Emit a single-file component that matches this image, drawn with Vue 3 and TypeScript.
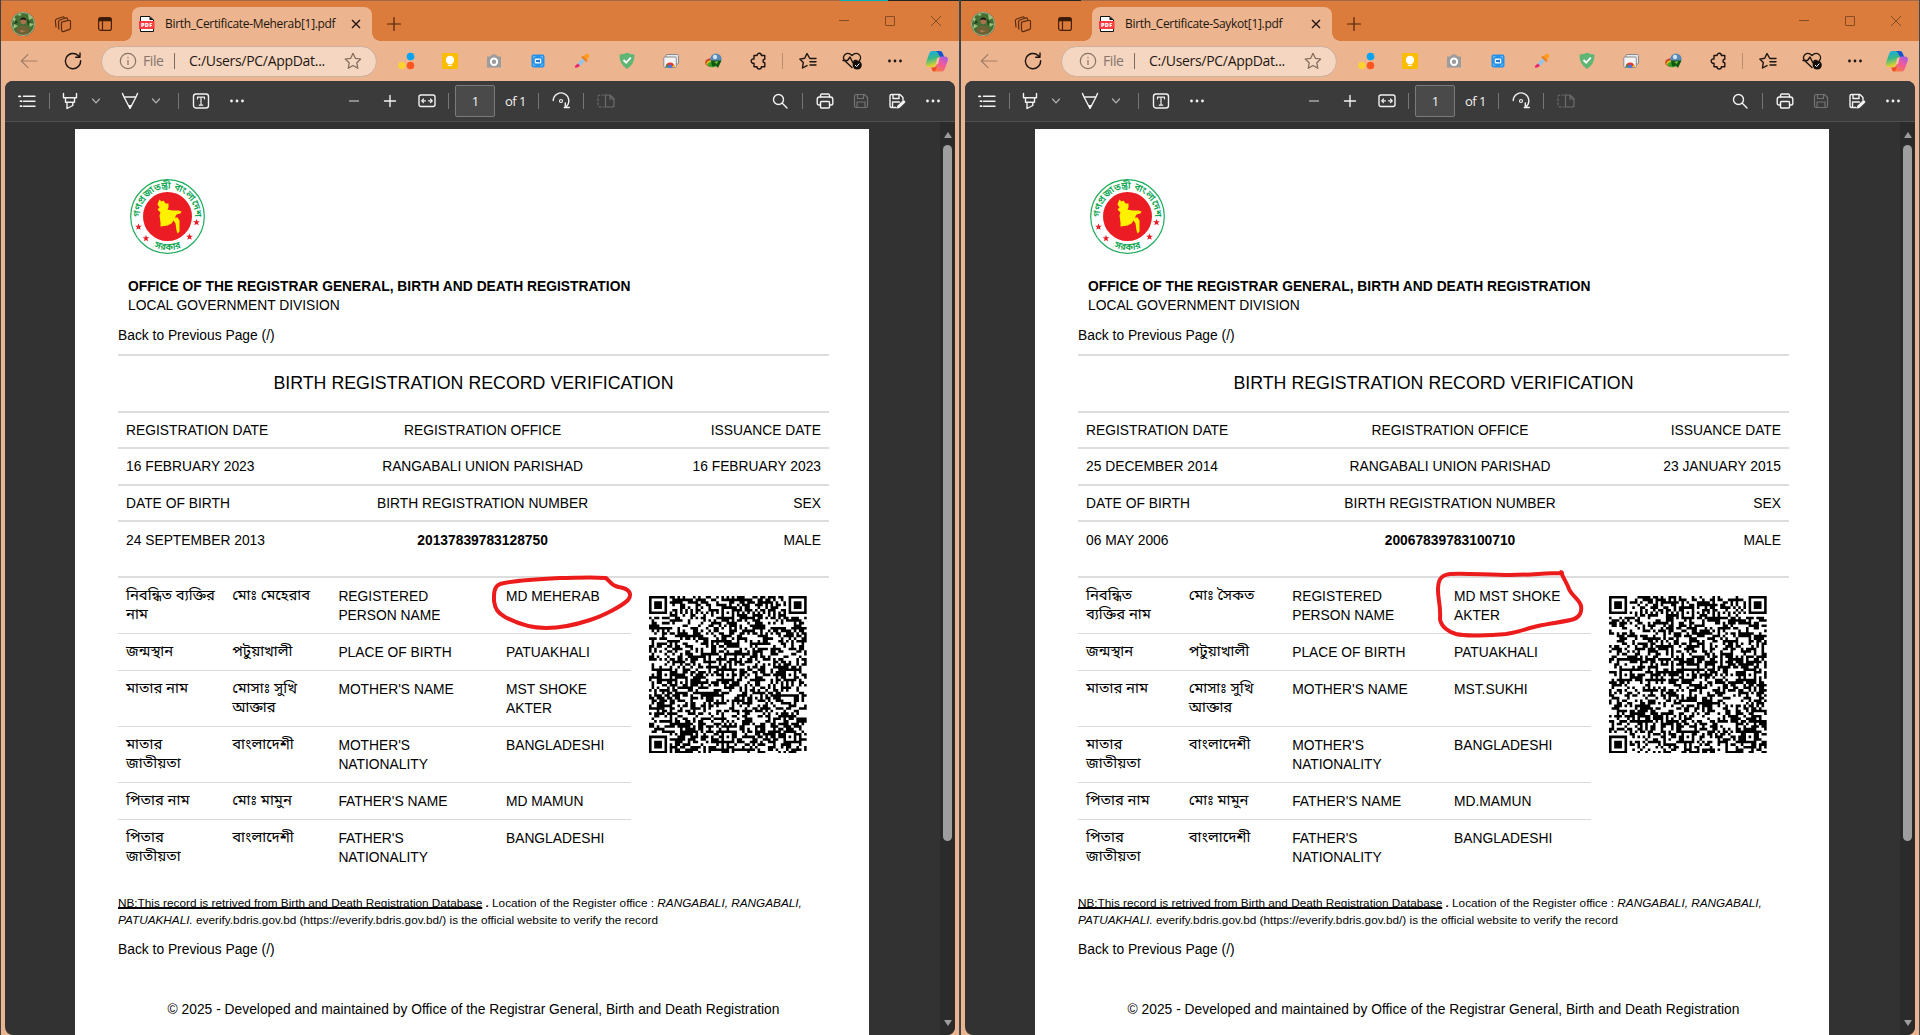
<script setup lang="ts">
interface Item { k: string; c: number; w: number; kind?: 'sep' | 'text' | 'field' | 'tab' | 'address' }
interface Cell { lines: string[] }
interface Doc {
  file: string; officeCol: number; cols: string; mark: string; seed: number
  head: string[][]; rows: Cell[][]
}

const row = (a: string, b: string, c: string, d: string): Cell[] =>
  [a, b, c, d].map((t) => ({ lines: t.split('|') }))

const docs: Doc[] = [
  {
    file: 'Birth_Certificate-Meherab[1].pdf',
    officeCol: 244.6,
    cols: '106.2px 106.2px 167.6px 1fr',
    seed: 11,
    mark: 'M606 578 C590 577 575 578 560 578 C540 579 510 581 500 584 C493 587 494 596 494 601 C495 609 498 613 505 617 C518 624 530 628 546 628 C565 628 578 624 590 620 C603 616 622 606 628 600 C632 595 630 590 623 588 C612 586 612 584 606 578 Z',
    head: [
      ['REGISTRATION DATE', 'REGISTRATION OFFICE', 'ISSUANCE DATE'],
      ['16 FEBRUARY 2023', 'RANGABALI UNION PARISHAD', '16 FEBRUARY 2023'],
      ['DATE OF BIRTH', 'BIRTH REGISTRATION NUMBER', 'SEX'],
      ['24 SEPTEMBER 2013', '20137839783128750', 'MALE'],
    ],
    rows: [
      row('নিবন্ধিত ব্যক্তির|নাম', 'মোঃ মেহেরাব', 'REGISTERED|PERSON NAME', 'MD MEHERAB'),
      row('জন্মস্থান', 'পটুয়াখালী', 'PLACE OF BIRTH', 'PATUAKHALI'),
      row('মাতার নাম', 'মোসাঃ সুখি|আক্তার', "MOTHER'S NAME", 'MST SHOKE|AKTER'),
      row('মাতার|জাতীয়তা', 'বাংলাদেশী', "MOTHER'S|NATIONALITY", 'BANGLADESHI'),
      row('পিতার নাম', 'মোঃ মামুন', "FATHER'S NAME", 'MD MAMUN'),
      row('পিতার|জাতীয়তা', 'বাংলাদেশী', "FATHER'S|NATIONALITY", 'BANGLADESHI'),
    ],
  },
  {
    file: 'Birth_Certificate-Saykot[1].pdf',
    officeCol: 252,
    cols: '102.8px 103.4px 161.8px 1fr',
    seed: 29,
    mark: 'M602 573 C585 573 570 575 550 575 C528 575 505 573 490 574 C480 575 478 581 478 590 C478 600 481 606 480 619 C481 627 489 632 496 634 C508 637 530 635 546 634 C560 632 568 628 578 626 C592 623 604 622 614 619 C620 617 622 611 621 606 C620 600 612 596 609 589 C607 583 604 580 601 572 Z',
    head: [
      ['REGISTRATION DATE', 'REGISTRATION OFFICE', 'ISSUANCE DATE'],
      ['25 DECEMBER 2014', 'RANGABALI UNION PARISHAD', '23 JANUARY 2015'],
      ['DATE OF BIRTH', 'BIRTH REGISTRATION NUMBER', 'SEX'],
      ['06 MAY 2006', '20067839783100710', 'MALE'],
    ],
    rows: [
      row('নিবন্ধিত|ব্যক্তির নাম', 'মোঃ সৈকত', 'REGISTERED|PERSON NAME', 'MD MST SHOKE|AKTER'),
      row('জন্মস্থান', 'পটুয়াখালী', 'PLACE OF BIRTH', 'PATUAKHALI'),
      row('মাতার নাম', 'মোসাঃ সুখি|আক্তার', "MOTHER'S NAME", 'MST.SUKHI'),
      row('মাতার|জাতীয়তা', 'বাংলাদেশী', "MOTHER'S|NATIONALITY", 'BANGLADESHI'),
      row('পিতার নাম', 'মোঃ মামুন', "FATHER'S NAME", 'MD.MAMUN'),
      row('পিতার|জাতীয়তা', 'বাংলাদেশী', "FATHER'S|NATIONALITY", 'BANGLADESHI'),
    ],
  },
]

const N = 61
/* Code block pattern: finder and alignment squares over a seeded module field. */
function codePath(seed: number): string {
  let s = seed * 7919 + 17
  const rnd = () => {
    s = (s + 0x6d2b79f5) | 0
    let t = Math.imul(s ^ (s >>> 15), 1 | s)
    t = (t + Math.imul(t ^ (t >>> 7), 61 | t)) ^ t
    return ((t ^ (t >>> 14)) >>> 0) / 4294967296
  }
  const g: boolean[][] = Array.from({ length: N }, () => Array.from({ length: N }, () => rnd() < 0.52))
  const square = (cx: number, cy: number, outer: number, dark: (d: number) => boolean) => {
    for (let y = cy - outer; y <= cy + outer; y++)
      for (let x = cx - outer; x <= cx + outer; x++)
        if (x >= 0 && y >= 0 && x < N && y < N) g[y][x] = dark(Math.max(Math.abs(x - cx), Math.abs(y - cy)))
  }
  for (let i = 8; i < N - 8; i++) { g[6][i] = i % 2 === 0; g[i][6] = i % 2 === 0 }
  for (const [x, y] of [[3, 3], [N - 4, 3], [3, N - 4]]) square(x, y, 4, (d) => d === 3 || d <= 1)
  for (const [x, y] of [[30, 6], [6, 30], [30, 30], [54, 30], [30, 54], [54, 54]]) square(x, y, 2, (d) => d !== 1)
  let out = ''
  for (let y = 0; y < N; y++) {
    for (let x = 0; x < N; x++) {
      if (!g[y][x]) continue
      let n = 1
      while (x + n < N && g[y][x + n]) n++
      out += `M${x} ${y}h${n}v1h-${n}z`
      x += n
    }
  }
  return out
}
const codes = docs.map((d) => codePath(d.seed))

const titleBar: Item[] = [
  { k: 'avatar', c: 23, w: 24 }, { k: 'workspaces', c: 63, w: 18 }, { k: 'tabs', c: 105, w: 16 },
  { k: '', c: 252, w: 240, kind: 'tab' }, { k: 'new', c: 393.5, w: 14 },
  { k: 'min', c: 844, w: 12 }, { k: 'max', c: 890, w: 12 }, { k: 'close', c: 936, w: 12 },
]
const navBar: Item[] = [
  { k: 'back', c: 29, w: 18 }, { k: 'reload', c: 73, w: 18 }, { k: '', c: 239, w: 276, kind: 'address' },
  { k: 'dots3', c: 406, w: 18 }, { k: 'keep', c: 450, w: 16 }, { k: 'camera', c: 494, w: 16 },
  { k: 'recorder', c: 538, w: 14 }, { k: 'picker', c: 582, w: 16 }, { k: 'shield', c: 626.5, w: 16 },
  { k: 'cards', c: 670.5, w: 16 }, { k: 'idm', c: 714, w: 18 }, { k: 'puzzle', c: 758.5, w: 18 },
  { k: '', c: 782.5, w: 1, kind: 'sep' }, { k: 'favs', c: 807.5, w: 18 }, { k: 'heart', c: 852, w: 20 },
  { k: 'more', c: 895, w: 16 }, { k: 'copilot', c: 937, w: 24 },
]
const pdfBar: Item[] = [
  { k: 'list', c: 27, w: 18 }, { k: '', c: 49.5, w: 1, kind: 'sep' }, { k: 'marker', c: 70, w: 16 },
  { k: 'chev', c: 96, w: 10 }, { k: 'pen', c: 130, w: 18 }, { k: 'chev', c: 156, w: 10 },
  { k: '', c: 178.5, w: 1, kind: 'sep' }, { k: 'textbox', c: 201, w: 18 }, { k: 'more', c: 237, w: 16 },
  { k: 'minus', c: 354, w: 12 }, { k: 'plus', c: 389.5, w: 14 }, { k: 'fit', c: 426.5, w: 18 },
  { k: '', c: 448.5, w: 1, kind: 'sep' }, { k: '1', c: 475, w: 40, kind: 'field' },
  { k: 'of 1', c: 515.5, w: 30, kind: 'text' }, { k: '', c: 538.5, w: 1, kind: 'sep' },
  { k: 'rotate', c: 561, w: 18 }, { k: '', c: 583.5, w: 1, kind: 'sep' }, { k: 'pages', c: 606, w: 18 },
  { k: 'search', c: 780, w: 16 }, { k: '', c: 802.5, w: 1, kind: 'sep' }, { k: 'print', c: 825, w: 18 },
  { k: 'save', c: 861, w: 16 }, { k: 'saveas', c: 897, w: 18 }, { k: 'more', c: 933, w: 16 },
]
const gap = (bar: Item[], i: number, start: number): string => {
  const prev = i ? bar[i - 1].c + bar[i - 1].w / 2 : start
  return bar[i].c - bar[i].w / 2 - prev + 'px'
}

const P = 'fill="none" stroke="currentColor" stroke-linecap="round" stroke-linejoin="round"'
const L = P + ' stroke-width="1.2"'
const M = P + ' stroke-width="1.4"'
/* Each entry: viewBox and drawing; the width comes from the bar item. */
const icons: Record<string, [string, string]> = {
  avatar: ['0 0 24 24', '<clipPath id="av"><circle cx="12" cy="12" r="12"/></clipPath><g clip-path="url(#av)"><rect width="24" height="24" fill="#456f33"/><path d="M1 4l4 3-2 3zM17 2l5 4-4 2zM3 12l4 2-5 3zM18 11l5 1-4 3zM8 1l3 2-4 1z" fill="#9dc07d"/><path d="M0 0h8l-3 3zM16 7l3 3-2 4zM5 8l2 3-4 1z" fill="#20401d"/><path d="M5 24l1-8 4-2h4l4 2 1 8z" fill="#6d6135"/><circle cx="12.3" cy="9.2" r="3" fill="#a87350"/><path d="M9.3 8.5c0-4 6-4 6 0-2-1.500-4-1.500-6 0z" fill="#17170f"/><path d="M9 18l6 1-5 1.500z" fill="#b08055"/></g><circle cx="12" cy="12" r="11.5" fill="none" stroke="#9db79b" stroke-width="1"/>'],
  workspaces: ['0 0 18 18', `<g ${L} color="#5a2b10"><path d="M7.500 7.200l7-1.800q2-.4 2 1.500v6q0 1-1 1.500l-5.500 2q-2 .6-2.500-1.200z"/><path d="M4.800 14l-.3-7q0-1.500 1.400-2l6-2q1.600-.4 1.700 1.200"/><path d="M2 12l-.6-6q-.1-1.500 1.200-2l6-2q1.500-.4 1.700.8"/></g>`],
  tabs: ['0 0 16 16', `<rect x="1.600" y="1.600" width="12.800" height="12.800" rx="2.200" ${L} color="#4a2008"/><path d="M1.500 3.500q0-2 2-2h9q2 0 2 2v1.700h-13z" fill="#3a1a08"/><path d="M5.500 5v9" ${L} color="#4a2008"/>`],
  new: ['0 0 14 14', `<path d="M7 .5v13M.5 7h13" ${L} color="#4f2509"/>`],
  min: ['0 0 12 12', '<path d="M1 5.500h10" stroke="#834a24"/>'],
  max: ['0 0 12 12', '<rect x="1.500" y="1.500" width="9" height="9" rx=".5" fill="none" stroke="#834a24"/>'],
  close: ['0 0 12 12', '<path d="M1 1l10 10M11 1L1 11" stroke="#834a24"/>'],
  back: ['0 0 18 18', `<path d="M17 9H1.500M8 2.300L1.300 9 8 15.700" ${L} color="#a27c63"/>`],
  reload: ['0 0 18 18', `<path d="M16.600 8.700a7.600 7.600 0 1 1-2.400-5.200l1.500 1.500M16 1v4.300h-4.300" ${M} color="#1b1410"/>`],
  dots3: ['0 0 18 18', '<circle cx="13.500" cy="4.500" r="3.800" fill="#03a5f3"/><circle cx="4.800" cy="13.500" r="3.600" fill="#fdd32c"/><circle cx="13.500" cy="13.500" r="3.800" fill="#fd5621"/>'],
  keep: ['0 0 16 16', '<rect width="16" height="16" rx="1" fill="#fbbc04"/><circle cx="8" cy="7" r="4.200" fill="#fff"/><path d="M5.500 9h5v1.500h-5zM6 11.700h4v1.300H6z" fill="#fff"/>'],
  camera: ['0 0 16 16', '<path d="M1 3.500h3.500l1.500-2h4l1.500 2H15v11H1z" fill="#9b9b9d"/><circle cx="8" cy="8.800" r="3.200" fill="none" stroke="#fff" stroke-width="2"/>'],
  recorder: ['0 0 14 14', '<rect x=".5" y=".5" width="13" height="13" rx="2" fill="#2491ea"/><path d="M2.500 4.500v-2h2M9.500 2.500h2v2M11.500 9.500v2h-2M4.500 11.500h-2v-2" fill="none" stroke="#7cc2fa" stroke-width=".8"/><rect x="3.700" y="4.500" width="6.600" height="5" rx="1" fill="#e9f5ff"/><path d="M5 6h2.500l1.500-.5v3L7.500 8H5z" fill="#2277d2"/>'],
  picker: ['0 0 16 16', '<path d="M9 3.500l3-2.500q2-1 3 1t-1 3l-2.500 3z" fill="#ff9a1c"/><path d="M8 3.500l5 5" stroke="#f07a1a" stroke-width="2"/><path d="M8.500 5.500l2.500 2.500-5 5-2.500-2.500z" fill="#8fc5e8"/><path d="M4 10.500L6 13l-3.500 1.800-1.700-.3 .6-2z" fill="#e8226b"/>'],
  shield: ['0 0 16 18', '<path d="M8 .8q4 2 7.500 1.800Q16 12 8 17 0 12 .5 2.600 4 2.800 8 .8z" fill="#5fb574"/><path d="M4.500 8l2.700 2.700 4.600-5" fill="none" stroke="#fff" stroke-width="1.800"/>'],
  cards: ['0 0 16 16', '<rect x="3" y="1.500" width="12.500" height="9.500" rx="1" fill="#e9e9e9" stroke="#8b8b8b"/><rect x=".8" y="4" width="12.500" height="10.500" rx="1" fill="#f4f4f4" stroke="#8b8b8b"/><path d="M2.500 14a4.600 4.600 0 0 1 9.200 0z" fill="#e33b2e"/><path d="M2.500 14l1-3 2 3z" fill="#2a9d4b"/><path d="M9 14l2-2.500.8 2.500z" fill="#fbc116"/><circle cx="7.100" cy="13.300" r="1.900" fill="#3a7af0"/>'],
  idm: ['0 0 18 16', '<ellipse cx="6" cy="9.500" rx="6" ry="4.300" fill="#c8501e"/><ellipse cx="6.500" cy="10.500" rx="5" ry="3" fill="#f1d022"/><ellipse cx="7.500" cy="11.500" rx="5" ry="2.800" fill="#3aa22c"/><circle cx="11" cy="6" r="5.600" fill="#5789b8"/><circle cx="10" cy="4" r="2.200" fill="#cfe0ee"/><path d="M6 7.500h10.500L13 15l-2-2.500-4 1z" fill="#12580f"/><path d="M9 9l4-1-1 3z" fill="#77c044"/>'],
  puzzle: ['0 0 18 18', `<path d="M4 3.500h3a2.200 2.200 0 0 1 4.400 0h3.400v3.700a1.800 1.800 0 0 0 0 3.600v4h-3.400a2.200 2.200 0 0 1-4.400 0H4v-3.600a2.200 2.200 0 1 1 0-4.200z" ${M} color="#1b1410"/>`],
  favs: ['0 0 18 18', `<g ${M} color="#1b1410"><path d="M10.500 6L8 1.500 5.700 6.300l-4.900.8L4.300 10.600 3.500 16 8 13.600"/><path d="M11 6.500h6M11 9.800h6M11 13h6"/></g>`],
  heart: ['0 0 20 18', `<g ${M} color="#1b1410"><path d="M10 15.500L2.500 8.500C-1 4 5-1.500 10 3.500 15-1.500 21 4 17.500 8.500M1 8.500h4.500L8 5l3 6 1.500-2.500h2"/></g><circle cx="15.200" cy="13" r="4.600" fill="#15100d"/><path d="M13 13l1.600 1.600 2.700-3" stroke="#fff" fill="none"/>`],
  more: ['0 0 16 16', '<g fill="currentColor"><circle cx="2.500" cy="8" r="1.400"/><circle cx="8" cy="8" r="1.400"/><circle cx="13.500" cy="8" r="1.400"/></g>'],
  copilot: ['0 0 24 22', '<defs><linearGradient id="cpa" x2=".3" y2="1"><stop offset="0" stop-color="#18a7ee"/><stop offset=".5" stop-color="#35b98a"/><stop offset="1" stop-color="#f3d322"/></linearGradient><linearGradient id="cpb" x1="1" x2=".3" y2="1"><stop offset="0" stop-color="#9a5cf0"/><stop offset=".5" stop-color="#ee5ba0"/><stop offset="1" stop-color="#fa7a3c"/></linearGradient></defs><path d="M7 1h8q2 0 3 3l1 3h-4q-2 0-3 3l-1.500 5q-1 2-3 2H4q-3.500 0-3-4L4 4q1-3 3-3z" fill="url(#cpa)"/><path d="M11 1h4q2 0 3 3l1 3h-3q-2-1-2.500-3T11 1z" fill="#1a4fd0"/><path d="M17 21.500H9q-2 0-2.500-4h2q2.500 0 3.500-3l1.500-5q1-3 3-3h3q4 0 3.300 4L20 18.500q-1 3-3 3z" fill="url(#cpb)"/><path d="M6.500 17.500h2q2.500 0 3.500-3l-1 5q-.5 2-2 2-2 0-2.500-4z" fill="#ef4e2b"/><path d="M12 8h2.500l-1.500 6h-2z" fill="#f3c3a0"/>'],
  list: ['0 0 18 18', `<path d="M5.500 4.300H17M5.500 9.200H17M5.500 14.200H17" ${M}/><path d="M.8 4.300h1.600M2.500 9.200h1M2.500 14.200h1" ${P} stroke-width="1.800"/>`],
  marker: ['0 0 16 18', `<path d="M1.500 1.500v4.300h13V1.500M3.500 5.800v4.400h9V5.800M5 10.500v6l5.800-3v-3" ${M}/>`],
  chev: ['0 0 10 8', `<path d="M1.500 2L5 5.800 8.500 2" ${L}/>`],
  pen: ['0 0 18 18', `<path d="M1.500 1.500l1.500 3.500h12l1.500-3.500M3 5l6 11.500L15 5" ${M}/><path d="M7 13h4L9 16.500z" fill="currentColor"/>`],
  textbox: ['0 0 18 18', `<rect x="1.500" y="2" width="15" height="14" rx="2.500" ${M}/><path d="M5.500 7V5.200h7V7M9 5.200v8M7.300 13.200h3.400" ${L}/>`],
  minus: ['0 0 12 12', `<path d="M1 6h10" stroke="#a8a8a8" stroke-width="1.500"/>`],
  plus: ['0 0 14 14', `<path d="M7 1.500v11M1.500 7h11" ${M}/>`],
  fit: ['0 0 18 16', `<rect x="1" y="2" width="16" height="11.500" rx="2" ${M}/><path d="M4 7.800h3.500M5.500 6L3.700 7.800l1.800 1.800M14 7.800h-3.500M12.500 6l1.800 1.800-1.800 1.800" ${L}/>`],
  rotate: ['0 0 18 18', `<path d="M1.200 8.500a7.800 7.800 0 1 1 12.500 6.500M13.300 11v4.500h4M13.300 15.500h-1" ${M}/><circle cx="9" cy="9" r="1.500" ${L}/>`],
  pages: ['0 0 18 16', `<g color="#6d6d6d"><path d="M7 2H3q-2 0-2 2v8q0 2 2 2h4" ${L} stroke-dasharray="2 2.200"/><path d="M8.500 2h4.500l4 4v6q0 2-2 2H8.500zM13 2v4h4" ${L}/></g>`],
  search: ['0 0 16 16', `<circle cx="6.500" cy="6.500" r="5" ${M}/><path d="M10.300 10.300l4.700 4.700" ${M}/>`],
  print: ['0 0 18 18', `<g ${M}><path d="M4.500 5V3.500q0-1.500 1.500-1.500h6q1.500 0 1.500 1.500V5"/><path d="M4.500 13H3q-1.800 0-1.800-1.800V7.500Q1.200 5 3.500 5h11q2.300 0 2.300 2.500v3.700Q16.800 13 15 13h-1.500"/><rect x="4.500" y="9.500" width="9" height="6.500" rx="1"/></g>`],
  save: ['0 0 16 16', `<g ${L} color="#737373"><path d="M3 1.500h8.500L14.500 4.500V13q0 1.500-1.500 1.500H3q-1.500 0-1.500-1.500V3Q1.500 1.500 3 1.500zM4.500 1.500V5.500h6v-4M4 14.500V9h8v5.500"/></g>`],
  saveas: ['0 0 18 18', `<g ${M}><path d="M8 15.500H3.500Q2 15.500 2 14V4q0-1.500 1.500-1.500H12l3 3V8M5 2.500V6.500h6v-4M4.500 15.500V10h7"/></g><path d="M8.500 16.800l.8-3 5.500-5.300q1-.8 2 .2t.2 2l-5.500 5.300z" fill="currentColor"/>`],
}
</script>

<template>
  <main class="desk">
    <section v-for="(doc, n) in docs" :key="doc.file" class="win">
      <div class="edge" :class="'edge' + n"></div>
      <header class="bar title">
        <template v-for="(it, i) in titleBar" :key="i">
          <div v-if="it.kind === 'tab'" class="tab" :style="{ marginLeft: gap(titleBar, i, 1) }">
            <svg class="fav" viewBox="0 0 16 16">
              <path d="M1.500.5h9.500l3.500 3.500v11.500h-13z" fill="#fff" stroke="#111" />
              <path d="M10.500.5V4h4z" fill="#111" />
              <rect y="5" width="15.500" height="8" rx=".5" fill="#fb3b40" />
              <text x="7.700" y="11.300" text-anchor="middle" font-family="Open Sans, sans-serif" font-weight="800" font-size="5.600" letter-spacing=".3" fill="#fff">PDF</text>
            </svg>
            <span class="tabname">{{ doc.file }}</span>
            <svg class="x" viewBox="0 0 10 10"><path d="M1 1l8 8M9 1L1 9" stroke="#21150c" stroke-width="1.400" /></svg>
          </div>
          <svg v-else class="ico" :class="it.k" :viewBox="icons[it.k][0]" :style="{ marginLeft: gap(titleBar, i, 1), width: it.w + 'px' }" v-html="icons[it.k][1]" />
        </template>
      </header>
      <nav class="bar navi">
        <template v-for="(it, i) in navBar" :key="i">
          <i v-if="it.kind === 'sep'" class="sep" :style="{ marginLeft: gap(navBar, i, 1) }"></i>
          <div v-else-if="it.kind === 'address'" class="address" :style="{ marginLeft: gap(navBar, i, 1) }">
            <svg class="info" viewBox="0 0 18 18" fill="none" stroke="#8a7464" stroke-width="1.200"><circle cx="9" cy="9" r="7.700" /><path d="M9 8v5M9 5v1.300" /></svg>
            <span class="proto">File</span><i class="asep"></i><span class="path">C:/Users/PC/AppDat...</span>
            <svg class="star" viewBox="0 0 18 18" fill="none" stroke="#806a5b" stroke-width="1.200" stroke-linejoin="round"><path d="M9 1.300l2.300 5 5.500.7-4 3.800 1 5.500L9 13.600l-4.800 2.700 1-5.500-4-3.800 5.500-.7z" /></svg>
          </div>
          <svg v-else class="ico" :viewBox="icons[it.k][0]" :style="{ marginLeft: gap(navBar, i, 1), width: it.w + 'px' }" v-html="icons[it.k][1]" />
        </template>
      </nav>
      <div class="viewer">
        <div class="bar pdf">
          <template v-for="(it, i) in pdfBar" :key="i">
            <i v-if="it.kind === 'sep'" class="sep" :style="{ marginLeft: gap(pdfBar, i, 5) }"></i>
            <span v-else-if="it.kind === 'field'" class="field" :style="{ marginLeft: gap(pdfBar, i, 5) }">{{ it.k }}</span>
            <span v-else-if="it.kind === 'text'" class="count" :style="{ marginLeft: gap(pdfBar, i, 5) }">{{ it.k }}</span>
            <svg v-else class="ico" :class="it.k" :viewBox="icons[it.k][0]" :style="{ marginLeft: gap(pdfBar, i, 5), width: it.w + 'px' }" v-html="icons[it.k][1]" />
          </template>
        </div>
        <div class="canvas">
          <article class="page">
            <svg class="seal" viewBox="-37.500 -37.500 75 75">
              <circle r="36.800" fill="#fff" stroke="#21ab5c" stroke-width="1.200" />
              <circle r="24.500" fill="#ec1c24" />
              <path d="M-8-17l2 2 2-1 2 3 3 0 0 4-1 2 5 1 6 0 3 1-1 2-4 1-2 4 1-1 2 0 2 3 0 5 0 6-2 2-1-3-1-7-2-3-2 3-4 2-7 1 0-4-1-7 1-3-3-3 2-2-2-3 1-3z" fill="#fff100" />
              <defs><path :id="'arc' + n" d="M-27 5A27.500 27.500 0 1 1 27 5" /><path :id="'low' + n" d="M-20 27A33.600 33.600 0 0 0 20 27" /></defs>
              <g class="sealtext">
                <text><textPath :href="'#arc' + n" startOffset="50%" text-anchor="middle" textLength="88">গণপ্রজাতন্ত্রী বাংলাদেশ</textPath></text>
                <text><textPath :href="'#low' + n" startOffset="50%" text-anchor="middle">সরকার</textPath></text>
              </g>
              <g fill="#ec1c24">
                <path v-for="p in [[-29, 10.5], [29, 6], [-21.500, 22], [22, 20.500]]" :key="p[0]" :transform="`translate(${p[0]} ${p[1]})`" d="M0-3.500l.9 2.300h2.500l-2 1.500.8 2.500L0 1.400l-2.200 1.400.8-2.500-2-1.500h2.500z" />
              </g>
            </svg>
            <div class="office"><b>OFFICE OF THE REGISTRAR GENERAL, BIRTH AND DEATH REGISTRATION</b><span>LOCAL GOVERNMENT DIVISION</span></div>
            <p class="backlink">Back to Previous Page (/)</p>
            <h1>BIRTH REGISTRATION RECORD VERIFICATION</h1>
            <div v-for="(r, i) in doc.head" :key="i" class="hrow" :class="'h' + i" :style="{ gridTemplateColumns: doc.officeCol - 8 + 'px 240px 1fr' }">
              <span>{{ r[0] }}</span><span class="mid">{{ r[1] }}</span><span class="end">{{ r[2] }}</span>
            </div>
            <div class="details">
              <div class="people">
                <div v-for="(r, i) in doc.rows" :key="i" class="prow" :class="'p' + i" :style="{ gridTemplateColumns: doc.cols }">
                  <span v-for="(c, j) in r" :key="j" :class="{ bn: j < 2 }"><span v-for="l in c.lines" :key="l" class="ln">{{ l }}</span></span>
                </div>
              </div>
              <svg class="code" viewBox="0 0 61 61"><path :d="codes[n]" /></svg>
            </div>
            <div class="note">
              <div><u>NB:This record is retrived from Birth and Death Registration Database</u><b> .</b> Location of the Register office : <i>RANGABALI, RANGABALI,</i></div>
              <div><i>PATUAKHALI.</i> everify.bdris.gov.bd (https://everify.bdris.gov.bd/) is the official website to verify the record</div>
            </div>
            <p class="backlink second">Back to Previous Page (/)</p>
            <p class="foot">© 2025 - Developed and maintained by Office of the Registrar General, Birth and Death Registration</p>
          </article>
          <aside class="track">
            <svg viewBox="0 0 10 8"><path d="M5 1l4 6H1z" fill="#9c9c9c" /></svg>
            <div class="thumb"></div>
            <svg viewBox="0 0 10 8"><path d="M5 7l4-6H1z" fill="#9c9c9c" /></svg>
          </aside>
        </div>
      </div>
      <svg class="ink" viewBox="0 0 960 1035"><path :d="doc.mark" fill="none" stroke="#ec1c1c" stroke-width="4" stroke-linejoin="round" /></svg>
    </section>
  </main>
</template>

<style>
body { margin: 0; overflow: hidden; background: #2b2b2b; }
</style>

<style scoped>
.desk { display: flex; width: 1920px; height: 1035px; overflow: hidden; }
.win {
  position: relative; box-sizing: border-box; width: 960px; height: 1035px; display: flex; flex-direction: column;
  border-left: 1px solid #3c4148; border-right: 1px solid #3c4b52; background: #ecb590; overflow: hidden;
}
.edge { height: 1px; flex: none; }
.edge0 { background: linear-gradient(90deg, #a26847 839px, #00b0c0 839px 887px, #26231f 887px); }
.edge1 { background: linear-gradient(90deg, #26231f 120px, #a26847 120px); }
.bar { display: flex; align-items: center; height: 40px; flex: none; }
.title { background: #db7c3c; }
.ico { flex: none; display: block; overflow: visible; }
.title .ico { margin-top: 6px; }
.title .min, .title .max, .title .close { margin-top: 0; }
.title .new { margin-top: 5px; }
.tab {
  position: relative; box-sizing: border-box; width: 240px; height: 34px; margin-top: 6px; flex: none; display: flex; align-items: center;
  border-radius: 8px 8px 0 0; background: #ecb590; padding-left: 7px;
}
.tab::before, .tab::after { content: ''; position: absolute; bottom: 0; width: 8px; height: 8px; }
.tab::before { left: -8px; background: radial-gradient(circle at 0 0, transparent 7.5px, #ecb590 8px); }
.tab::after { right: -8px; background: radial-gradient(circle at 100% 0, transparent 7.5px, #ecb590 8px); }
.fav { width: 16px; height: 16px; }
.tabname { margin-left: 10px; width: 181px; font: 12px/16px 'Open Sans', sans-serif; color: #21160e; white-space: nowrap; letter-spacing: -.32px; }
.x { width: 10px; height: 10px; margin-left: 5px; }
.navi { color: #1b1410; }
.sep { width: 1px; height: 16px; flex: none; background: #767676; }
.navi .sep { background: #b98d70; }
.address {
  box-sizing: border-box; width: 276px; height: 31px; flex: none; display: flex; align-items: center; padding-left: 17px;
  border: 1px solid #cdaf9b; border-radius: 16px; background: #f5d6c1;
}
.info { width: 18px; height: 18px; }
.proto { margin-left: 6px; width: 23px; font: 14px/20px 'Open Sans', sans-serif; color: #85756a; letter-spacing: -.4px; }
.asep { width: 1px; height: 16px; margin-left: 8px; background: #7b6a5e; }
.path { margin-left: 14px; width: 136px; font: 14px/20px 'Open Sans', sans-serif; color: #1f1813; white-space: nowrap; letter-spacing: -.3px; }
.star { width: 18px; height: 18px; margin-left: 19px; }
.viewer { flex: 1; min-height: 0; display: flex; flex-direction: column; margin: 0 4px; border-radius: 8px; overflow: hidden; background: #323232; }
.pdf { background: #3b3b3b; color: #f2f2f2; border-bottom: 1px solid #505050; }
.chev { color: #b5b5b5; }
.field { box-sizing: border-box; width: 40px; height: 32px; border: 1px solid #7b7b7b; border-radius: 2px; background: #4a4a4a; font: 13px/30px 'Open Sans', sans-serif; text-align: center; padding-left: 1px; }
.count { width: 30px; text-align: center; font: 13px/20px 'Open Sans', sans-serif; white-space: nowrap; letter-spacing: -.5px; }
.canvas { flex: 1; min-height: 0; display: flex; justify-content: space-between; }
.page {
  box-sizing: border-box; width: 794px; margin: 7px 0 0 70px; padding: 0 40px 0 43px; background: #fff; color: #000; overflow: hidden;
  font: 13.82px/19.7px 'Liberation Sans', Arial, sans-serif;
}
.seal { display: block; width: 75px; height: 75px; margin: 50px 0 0 12px; }
.sealtext { font: 600 9.5px 'Noto Sans Bengali', 'Noto Sans', sans-serif; fill: #0aa550; }
.office { display: flex; flex-direction: column; margin: 22.6px 0 0 10px; white-space: nowrap; }
.backlink { margin: 10px 0 0; height: 19.5px; }
h1 { box-sizing: border-box; height: 57px; margin: 8.2px 0 0; border-top: 2px solid #ddd; padding-top: 17px; font-size: 17.8px; line-height: 20px; font-weight: 400; text-align: center; }
.hrow { box-sizing: border-box; display: grid; height: 36px; border-top: 2px solid #ddd; padding: 7px 8px 0; line-height: 20px; }
.h1 { height: 37px; }
.h3 { height: 56px; padding-top: 8px; }
.h3 .mid { font-weight: 700; }
.mid { text-align: center; }
.end { text-align: right; }
.details { display: flex; height: 318px; box-sizing: border-box; border-top: 2px solid #ddd; }
.people { width: 513px; }
.prow { box-sizing: border-box; display: grid; padding: 9px 0 0 8px; border-top: 1px solid #d9d9d9; height: 56px; }
.p0 { border-top: 0; height: 55px; }
.p1, .p4 { height: 37px; }
.ln { display: block; white-space: nowrap; }
.bn { font-family: 'Noto Sans Bengali', 'Noto Sans', 'Liberation Sans', sans-serif; font-size: 14.8px; }
.code { width: 157.7px; height: 157.7px; margin: 18px 0 0 18px; }
.note { font-size: 11.78px; line-height: 17px; white-space: nowrap; }
u { text-decoration-thickness: 2px; text-underline-offset: 0; text-decoration-skip-ink: none; }
.second { margin-top: 12px; }
.foot { margin: 40.5px 0 0; text-align: center; }
.track { box-sizing: border-box; width: 15px; display: flex; flex-direction: column; align-items: center; background: #2b2b2b; padding: 9px 0 8px; }
.track svg { width: 10px; height: 8px; flex: none; }
.thumb { width: 9px; height: 696px; margin: 6px 0 auto; border-radius: 5px; background: #9e9e9e; }
.ink { position: absolute; left: -1px; top: 0; width: 960px; height: 1035px; pointer-events: none; }
</style>
